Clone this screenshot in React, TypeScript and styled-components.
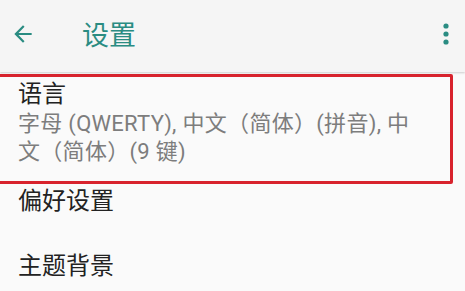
import styled, { createGlobalStyle } from 'styled-components'

const Global = createGlobalStyle`
  html, body {
    margin: 0;
    padding: 0;
    background: #fafafa;
    overflow: hidden;
  }
  body {
    font-family: Roboto, "Noto Sans CJK SC", sans-serif;
  }
`

const Page = styled.div`
  width: 465px;
  height: 291px;
  background: #fafafa;
  overflow: hidden;
`

const TopBar = styled.header`
  display: flex;
  align-items: center;
  box-sizing: border-box;
  height: 72px;
  padding: 0 15px 4px 10px;
  background: #f5f5f5;
  box-shadow: 0 1px 2px rgba(0, 0, 0, 0.18);
  position: relative;
  z-index: 1;
`

const IconButton = styled.button`
  display: inline-flex;
  align-items: center;
  justify-content: center;
  padding: 0;
  border: 0;
  background: transparent;
  color: #2a8c82;
`

const Title = styled.h1`
  flex: 1;
  margin: 0 0 2px 46px;
  font-size: 27px;
  font-weight: 400;
  color: #2a8c82;
`

const List = styled.ul`
  list-style: none;
  margin: 0;
  padding: 0;
`

const Item = styled.li`
  display: flex;
  flex-direction: column;
  justify-content: center;
  box-sizing: border-box;
  height: 65px;
  padding: 0 16px 0 18px;
`

const LanguageItem = styled(Item)`
  position: relative;
  height: auto;
  padding: 7px 37px 3px 18px;
`

/* red annotation frame drawn over the first row */
const Highlight = styled.span`
  position: absolute;
  top: 2px;
  bottom: -15px;
  left: -4px;
  right: 12px;
  border: 3px solid #d8232d;
  border-radius: 2px;
  pointer-events: none;
`

const ItemTitle = styled.div`
  font-size: 24px;
  line-height: 31px;
  color: #222;
`

const ItemSummary = styled.div`
  font-size: 22px;
  line-height: 28px;
  letter-spacing: 0.3px;
  color: #7d7d7d;
`

export default function App() {
  return (
    <Page>
      <Global />
      <TopBar>
        <IconButton aria-label="返回">
          <svg width="26" height="26" viewBox="0 0 24 24">
            <path d="M20 11H7.83l5.59-5.59L12 4l-8 8 8 8 1.41-1.41L7.83 13H20v-2z" fill="currentColor" />
          </svg>
        </IconButton>
        <Title>设置</Title>
        <IconButton aria-label="更多">
          <svg width="8" height="22" viewBox="0 0 8 22">
            <circle cx="4" cy="3" r="2.6" fill="currentColor" />
            <circle cx="4" cy="11" r="2.6" fill="currentColor" />
            <circle cx="4" cy="19" r="2.6" fill="currentColor" />
          </svg>
        </IconButton>
      </TopBar>
      <List>
        <LanguageItem>
          <ItemTitle>语言</ItemTitle>
          <ItemSummary>字母 (QWERTY), 中文（简体）(拼音), 中文（简体）(9 键)</ItemSummary>
          <Highlight />
        </LanguageItem>
        <Item>
          <ItemTitle>偏好设置</ItemTitle>
        </Item>
        <Item>
          <ItemTitle>主题背景</ItemTitle>
        </Item>
      </List>
    </Page>
  )
}
